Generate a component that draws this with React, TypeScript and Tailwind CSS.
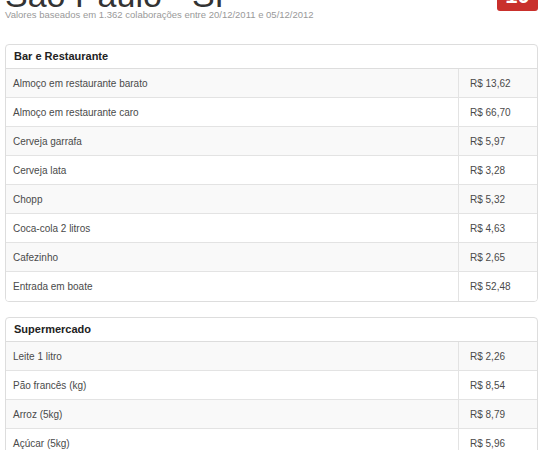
import React from "react";

type Item = { name: string; price: string };

const sections: { title: string; items: Item[] }[] = [
  {
    title: "Bar e Restaurante",
    items: [
      { name: "Almoço em restaurante barato", price: "R$ 13,62" },
      { name: "Almoço em restaurante caro", price: "R$ 66,70" },
      { name: "Cerveja garrafa", price: "R$ 5,97" },
      { name: "Cerveja lata", price: "R$ 3,28" },
      { name: "Chopp", price: "R$ 5,32" },
      { name: "Coca-cola 2 litros", price: "R$ 4,63" },
      { name: "Cafezinho", price: "R$ 2,65" },
      { name: "Entrada em boate", price: "R$ 52,48" },
    ],
  },
  {
    title: "Supermercado",
    items: [
      { name: "Leite 1 litro", price: "R$ 2,26" },
      { name: "Pão francês (kg)", price: "R$ 8,54" },
      { name: "Arroz (5kg)", price: "R$ 8,79" },
      { name: "Açúcar (5kg)", price: "R$ 5,96" },
      { name: "Feijão (kg)", price: "R$ 5,12" },
    ],
  },
];

function Panel({ title, items }: { title: string; items: Item[] }) {
  return (
    <div className="border border-[#dddddd] rounded-[4px] bg-white overflow-hidden">
      <div className="h-[24px] flex items-center px-[8px] text-[11px] font-bold text-[#222] border-b border-[#dddddd]">
        {title}
      </div>
      {items.map((it, i) => (
        <div
          key={it.name}
          className={`flex h-[29px] text-[10px] text-[#4a4a4a] ${
            i < items.length - 1 ? "border-b border-[#e3e3e3]" : ""
          } ${i % 2 === 0 ? "bg-[#f9f9f9]" : "bg-white"}`}
        >
          <div className="flex-1 flex items-center pl-[7px]">{it.name}</div>
          <div className="w-[79px] flex items-center pl-[11px] border-l border-[#e3e3e3]">
            {it.price}
          </div>
        </div>
      ))}
    </div>
  );
}

export default function App() {
  return (
    <div
      className="bg-white h-[450px] overflow-hidden"
      style={{ fontFamily: '"Liberation Sans", Arial, sans-serif' }}
    >
      <div className="-mt-[20px] pl-[5px] pr-[6px]">
        <div className="flex justify-between items-start">
          <div>
            <h1 className="text-[34px] leading-[30px] text-[#333] font-normal">
              São Paulo - SP
            </h1>
            <p className="text-[9.5px] leading-[9px] text-[#999]">
              Valores baseados em 1.362 colaborações entre 20/12/2011 e 05/12/2012
            </p>
          </div>
          <div className="w-[41px] h-[31px] rounded-[3px] bg-[#c9302c] text-white font-bold text-[22px] leading-[31px] text-center">
            10
          </div>
        </div>
        <div className="mt-[25px] flex flex-col gap-[15px]">
          {sections.map((s) => (
            <Panel key={s.title} title={s.title} items={s.items} />
          ))}
        </div>
      </div>
    </div>
  );
}
